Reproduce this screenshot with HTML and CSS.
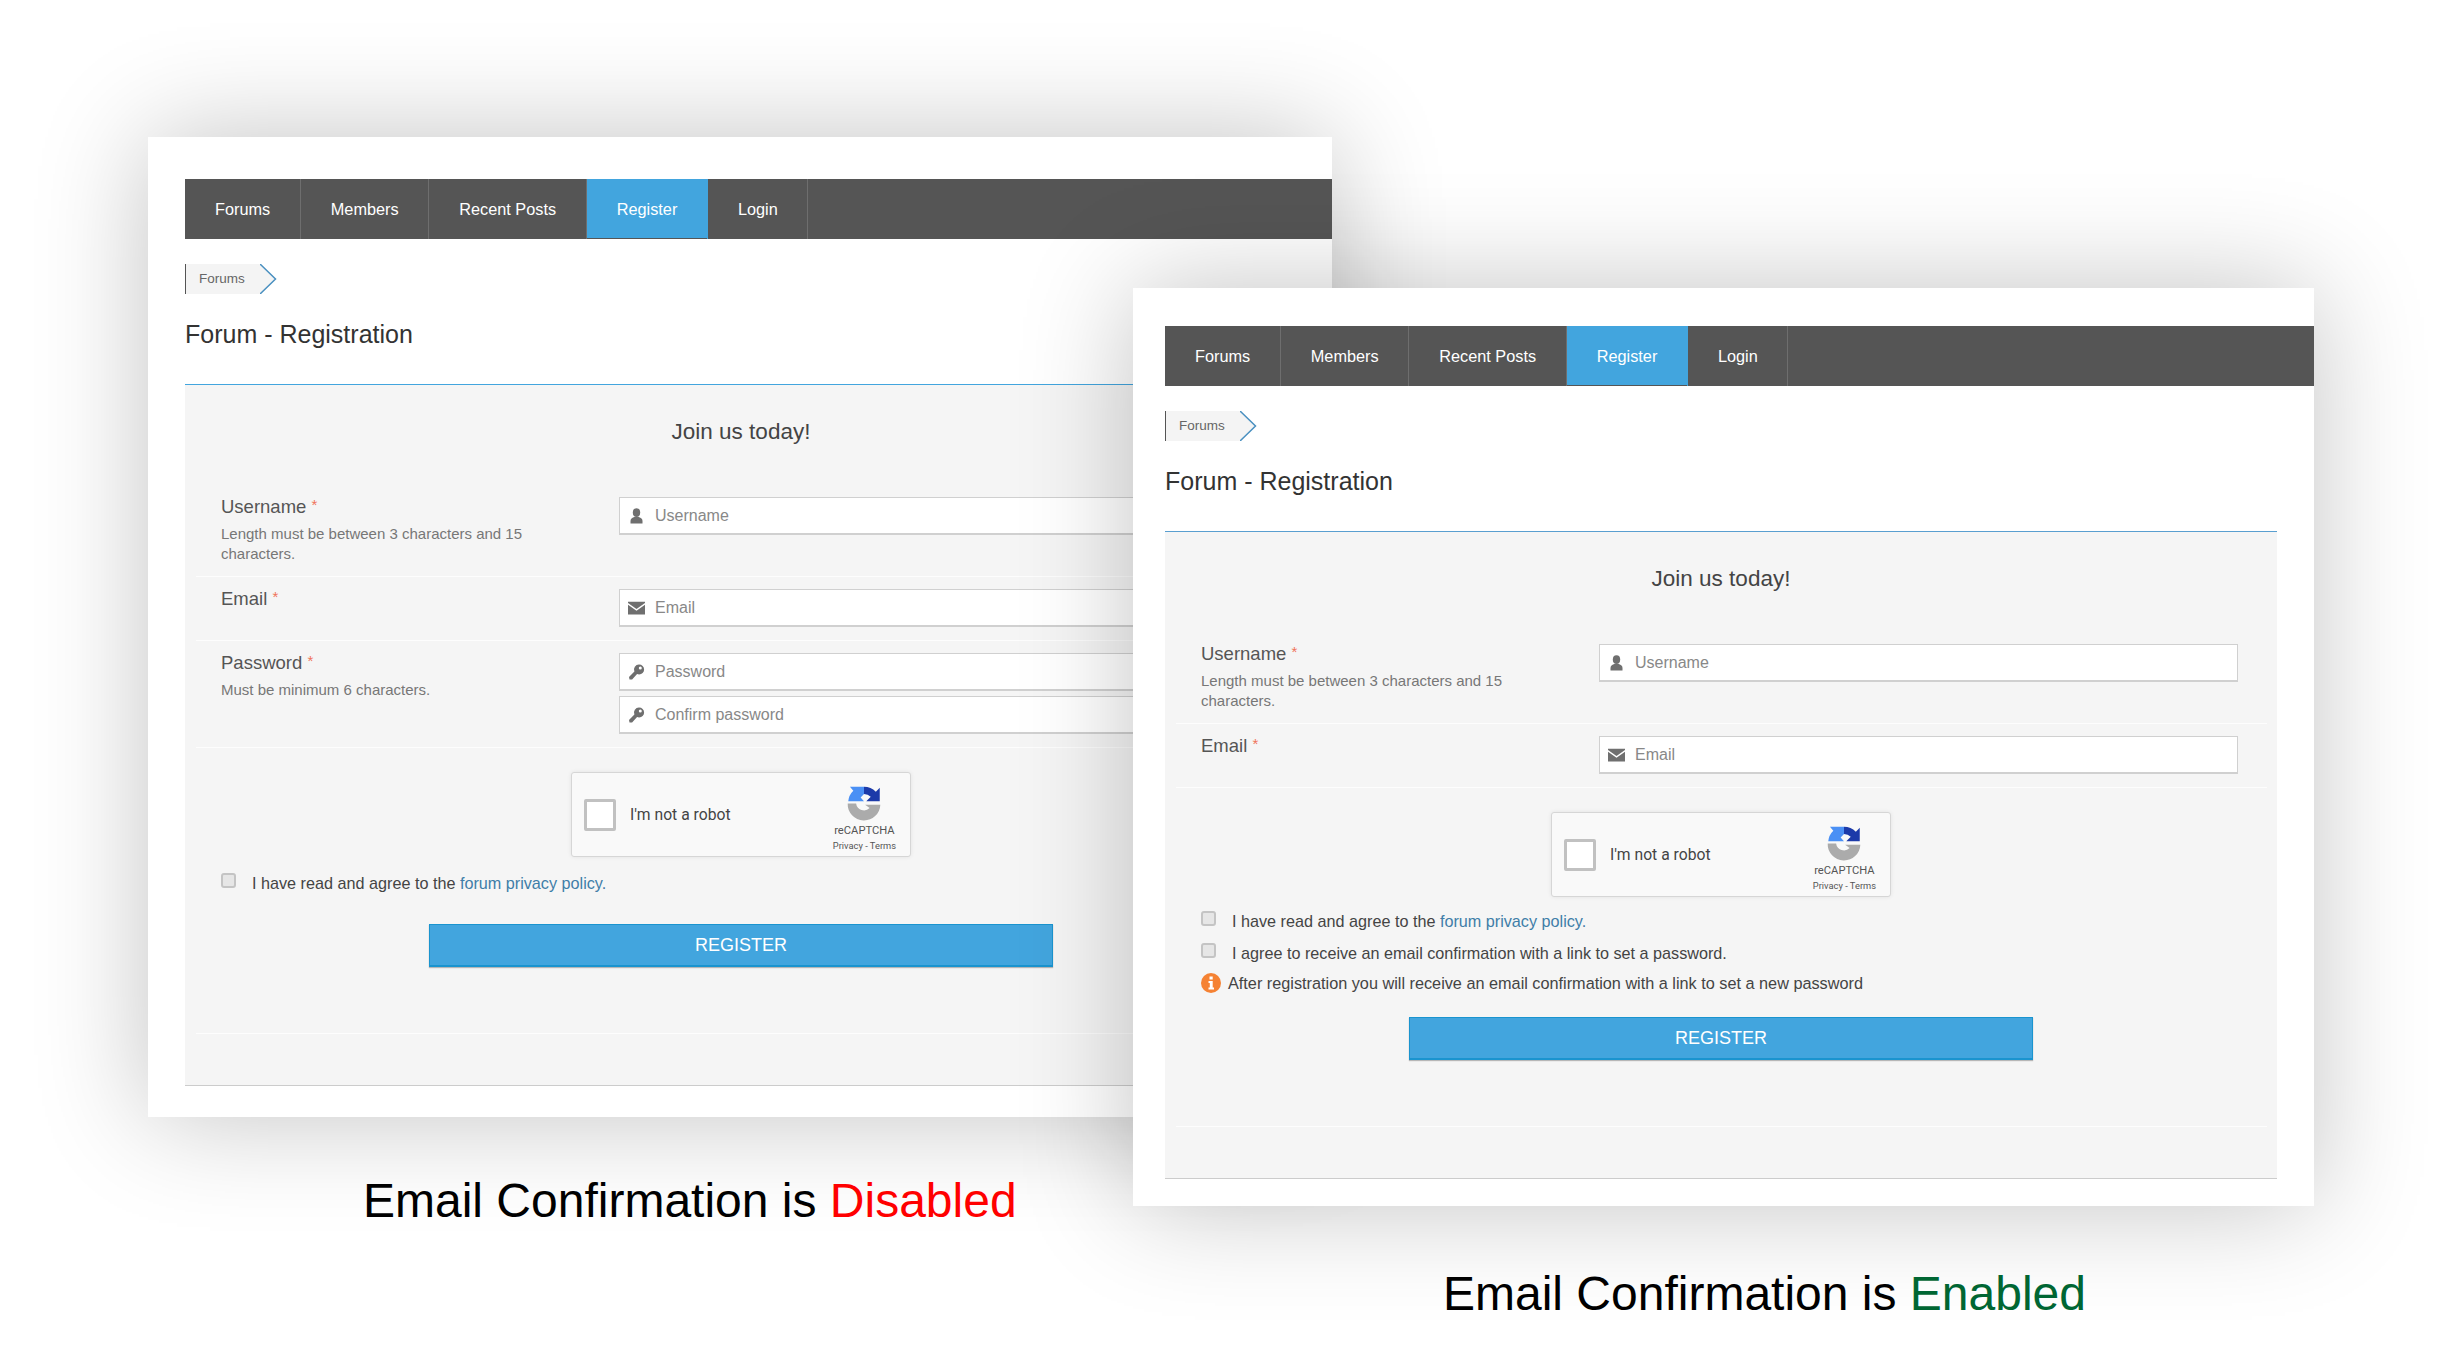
FILE: index.html
```html
<!DOCTYPE html>
<html lang="en">
<head>
<meta charset="utf-8">
<title>Email Confirmation comparison</title>
<link rel="stylesheet" href="styles.css">
</head>
<body>
<svg class="defs" aria-hidden="true">
  <symbol id="i-user" viewBox="0 0 16 16"><ellipse cx="8" cy="4.6" rx="3.7" ry="4.4"/><path d="M2 15.5v-2.6c0-2.4 2.2-3.3 3.8-3.9h4.4c1.6.6 3.8 1.5 3.8 3.9v2.6z"/></symbol>
  <symbol id="i-mail" viewBox="0 0 16 12"><path d="M0 0h16v1.4L8 7 0 1.4z"/><path d="M0 3l8 5.6L16 3v9H0z"/></symbol>
  <symbol id="i-key" viewBox="0 0 16 16"><path fill-rule="evenodd" d="M10.6.5a5 5 0 0 1 0 10 5 5 0 0 1-2-.4L3.6 15.5H1L.5 13l5.4-5.5a5 5 0 0 1 4.700-7zM11.800 2.600a1.500 1.500 0 1 0 0 3 1.500 1.500 0 0 0 0-3z"/></symbol>
  <symbol id="i-captcha" viewBox="0 0 64 64">
    <path fill="#1c3aa9" d="M32 3a29 29 0 0 1 21 9l7-7v24H36l8-8a17 17 0 0 0-12-5z"/>
    <path fill="#4a90f5" d="M32 3v13l-6 6 6 7H4a29 29 0 0 1 9-19L7 3z"/>
    <path fill="#ababab" d="M3 33h15a14 14 0 0 0 24 8l-8-6h27a29 29 0 0 1-58-2z"/>
  </symbol>
  <symbol id="i-info" viewBox="0 0 20 20"><circle cx="10" cy="10" r="10" fill="#f58233"/><rect x="8.500" y="3.500" width="3.200" height="3" fill="#fff"/><path fill="#fff" d="M7.500 8h4.200v6.500h1.300V16.500H7.500v-2h1.300V10H7.500z"/></symbol>
</svg>

<section class="shot shot-a">
  <div class="window">
    <nav class="topnav">
      <a class="topnav-item">Forums</a>
      <a class="topnav-item">Members</a>
      <a class="topnav-item">Recent Posts</a>
      <a class="topnav-item is-active">Register</a>
      <a class="topnav-item">Login</a>
    </nav>
    <div class="crumb">
      <span class="crumb-label">Forums</span>
      <svg class="crumb-tip" viewBox="0 0 17 30"><path class="crumb-fill" d="M0 0L15.500 15 0 30z"/><path class="crumb-line" d="M0 0L15.500 15 0 30"/></svg>
    </div>
    <h1 class="page-title">Forum - Registration</h1>
    <div class="panel">
      <h2 class="join">Join us today!</h2>
      <div class="row">
        <div><div class="label">Username <span class="req">*</span></div><p class="hint">Length must be between 3 characters and 15 characters.</p></div>
        <div class="fields"><div class="field"><svg class="field-icon"><use href="#i-user"/></svg><span>Username</span></div></div>
      </div>
      <div class="row">
        <div><div class="label">Email <span class="req">*</span></div></div>
        <div class="fields"><div class="field"><svg class="field-icon"><use href="#i-mail"/></svg><span>Email</span></div></div>
      </div>
      <div class="row">
        <div><div class="label">Password <span class="req">*</span></div><p class="hint">Must be minimum 6 characters.</p></div>
        <div class="fields">
          <div class="field"><svg class="field-icon"><use href="#i-key"/></svg><span>Password</span></div>
          <div class="field"><svg class="field-icon"><use href="#i-key"/></svg><span>Confirm password</span></div>
        </div>
      </div>
      <div class="captcha">
        <span class="captcha-box"></span>
        <span class="captcha-text">I'm not a robot</span>
        <div class="captcha-brand"><svg class="captcha-logo"><use href="#i-captcha"/></svg><span class="captcha-name">reCAPTCHA</span><span class="captcha-links">Privacy - Terms</span></div>
      </div>
      <div class="checks">
        <div class="check"><span class="tick"></span><span>I have read and agree to the <a class="link">forum privacy policy.</a></span></div>
      </div>
      <button class="register" type="button">Register</button>
      <div class="panel-foot"></div>
    </div>
  </div>
  <p class="caption">Email Confirmation is <span class="off">Disabled</span></p>
</section>

<section class="shot shot-b">
  <div class="window">
    <nav class="topnav">
      <a class="topnav-item">Forums</a>
      <a class="topnav-item">Members</a>
      <a class="topnav-item">Recent Posts</a>
      <a class="topnav-item is-active">Register</a>
      <a class="topnav-item">Login</a>
    </nav>
    <div class="crumb">
      <span class="crumb-label">Forums</span>
      <svg class="crumb-tip" viewBox="0 0 17 30"><path class="crumb-fill" d="M0 0L15.500 15 0 30z"/><path class="crumb-line" d="M0 0L15.500 15 0 30"/></svg>
    </div>
    <h1 class="page-title">Forum - Registration</h1>
    <div class="panel">
      <h2 class="join">Join us today!</h2>
      <div class="row">
        <div><div class="label">Username <span class="req">*</span></div><p class="hint">Length must be between 3 characters and 15 characters.</p></div>
        <div class="fields"><div class="field"><svg class="field-icon"><use href="#i-user"/></svg><span>Username</span></div></div>
      </div>
      <div class="row">
        <div><div class="label">Email <span class="req">*</span></div></div>
        <div class="fields"><div class="field"><svg class="field-icon"><use href="#i-mail"/></svg><span>Email</span></div></div>
      </div>
      <div class="captcha">
        <span class="captcha-box"></span>
        <span class="captcha-text">I'm not a robot</span>
        <div class="captcha-brand"><svg class="captcha-logo"><use href="#i-captcha"/></svg><span class="captcha-name">reCAPTCHA</span><span class="captcha-links">Privacy - Terms</span></div>
      </div>
      <div class="checks">
        <div class="check"><span class="tick"></span><span>I have read and agree to the <a class="link">forum privacy policy.</a></span></div>
        <div class="check"><span class="tick"></span><span>I agree to receive an email confirmation with a link to set a password.</span></div>
        <div class="notice"><svg class="notice-icon"><use href="#i-info"/></svg><span>After registration you will receive an email confirmation with a link to set a new password</span></div>
      </div>
      <button class="register" type="button">Register</button>
      <div class="panel-foot"></div>
    </div>
  </div>
  <p class="caption">Email Confirmation is <span class="on">Enabled</span></p>
</section>
</body>
</html>
```
FILE: styles.css
```css
* { box-sizing: border-box; }
html, body { margin: 0; padding: 0; }
body {
  width: 2441px;
  height: 1369px;
  position: relative;
  overflow: hidden;
  background: #fff;
  font-family: "Liberation Sans", Arial, sans-serif;
  color: #444;
}
.defs { position: absolute; width: 0; height: 0; }

.shot { position: absolute; }
.shot-a { left: 148px; top: 137px; width: 1184px; }
.shot-b { left: 1133px; top: 288px; width: 1181px; }

.window {
  background: #fff;
  box-shadow: 0 0 105px rgba(0, 0, 0, .24);
}
.shot-a .window { padding: 42px 0 31px 37px; }
.shot-b .window { padding: 38px 0 27px 32px; }

.topnav { display: flex; height: 60px; background: #555; }
.topnav-item {
  display: flex;
  align-items: center;
  padding: 1px 29.600px 0 30px;
  color: #fff;
  font-size: 16.300px;
  border-right: 1px solid #6e6e6e;
}
.topnav-item.is-active { background: #42a5de; border-right-color: #42a5de; box-shadow: inset 0 -1px 0 #555; }

.crumb { display: flex; height: 30px; margin-top: 25px; }
.crumb-label {
  display: flex;
  align-items: center;
  width: 75px;
  padding: 0 0 1px 13px;
  background: #f4f4f4;
  border-left: 1px solid #555;
  color: #666;
  font-size: 13.500px;
}
.crumb-tip { width: 17px; height: 30px; }
.crumb-fill { fill: #f4f4f4; }
.crumb-line { fill: none; stroke: #4a90c0; stroke-width: 1.500; }

.page-title {
  margin: 25px 0 0;
  height: 65px;
  font-size: 25px;
  line-height: 30px;
  font-weight: 400;
  color: #333;
}

.panel {
  width: 1112px;
  padding: 32px 0 50px;
  background: #f5f5f5;
  border-top: 1px solid #42a5de;
  border-bottom: 1px solid #ccc;
}
.shot-b .panel { border-top-color: #5a9fd0; }
.join {
  margin: 0 0 38px;
  text-align: center;
  font-size: 22.500px;
  line-height: 30px;
  font-weight: 400;
  color: #444;
}
.row {
  display: grid;
  grid-template-columns: 398px 639px;
  margin: 0 10px 0 11px;
  padding: 12px 0 13px 25px;
  border-bottom: 1px solid #fdfdfd;
}
.label { margin-top: -2px; font-size: 18.500px; line-height: 20px; color: #555; }
.req { color: #f0735a; font-size: 15px; vertical-align: 3px; }
.hint {
  width: 320px;
  margin: 7px 0 -1px;
  font-size: 15px;
  line-height: 20px;
  color: #777;
}
.fields { display: flex; flex-direction: column; gap: 5px; }
.field {
  display: flex;
  align-items: center;
  gap: 10px;
  height: 38px;
  padding: 1px 0 0 8px;
  background: #fff;
  border: 2px solid #d0d0d0;
  border-width: 1px 1px 2px 1px;
  color: #888;
  font-size: 16px;
}
.field-icon { width: 17px; height: 16px; fill: #6f6f6f; flex: none; }

.captcha {
  display: flex;
  align-items: center;
  width: 340px;
  height: 85px;
  margin: 24px auto 0;
  padding-left: 12px;
  background: #f9f9f9;
  border: 1px solid #d6d6d6;
  border-radius: 3px;
  box-shadow: 0 0 4px rgba(0, 0, 0, .08);
}
.captcha-box {
  width: 32px;
  height: 32px;
  background: #fff;
  border: 3px solid #c1c1c1;
  border-radius: 2px;
  flex: none;
}
.captcha-text {
  margin-left: 14px;
  font-family: Roboto, "Liberation Sans", sans-serif;
  font-size: 15.700px;
  color: #444;
}
.captcha-brand {
  display: flex;
  flex-direction: column;
  align-items: center;
  margin: 8px 14px 0 auto;
  font-family: Roboto, "Liberation Sans", sans-serif;
  color: #555;
}
.captcha-logo { width: 36px; height: 36px; margin-bottom: 2px; }
.captcha-name { font-size: 11.200px; line-height: 16px; }
.captcha-links { font-size: 9.300px; line-height: 14px; }

.checks { display: flex; flex-direction: column; margin: 16px 0 31px; padding-left: 36px; }
.shot-b .checks { margin: 14px 0 24px; }
.check { display: flex; gap: 16px; font-size: 16.200px; line-height: 20px; color: #444; margin-bottom: 12px; }
.check:last-child { margin-bottom: 0; }
.tick {
  width: 15px;
  height: 15px;
  background: #e6e6e6;
  border: 2px solid #c4c4c4;
  border-radius: 3px;
  flex: none;
}
.link { color: #3f7ea8; }
.notice { display: flex; align-items: center; gap: 7px; margin-top: -2px; font-size: 16.250px; line-height: 20px; color: #444; }
.notice-icon { width: 20px; height: 20px; flex: none; }

.register {
  display: block;
  width: 624px;
  height: 43px;
  margin: 0 auto;
  padding: 1px 0 0;
  background: #42a5de;
  border: 1px solid #1a94cf;
  border-bottom-width: 2px;
  box-shadow: 0 1px 1px rgba(0, 0, 0, .25);
  color: #fff;
  font-family: inherit;
  font-size: 18px;
  text-transform: uppercase;
}
.panel-foot { margin: 66px 10px 0 11px; border-top: 1px solid #fdfdfd; padding-top: 1px; }

.caption { margin: 0; font-size: 48px; line-height: 56px; color: #000; white-space: nowrap; }
.shot-a .caption { margin: 56px 0 0 215px; }
.shot-b .caption { margin: 60px 0 0 310px; }
.off { color: #f00; }
.on { color: #006633; }
```
